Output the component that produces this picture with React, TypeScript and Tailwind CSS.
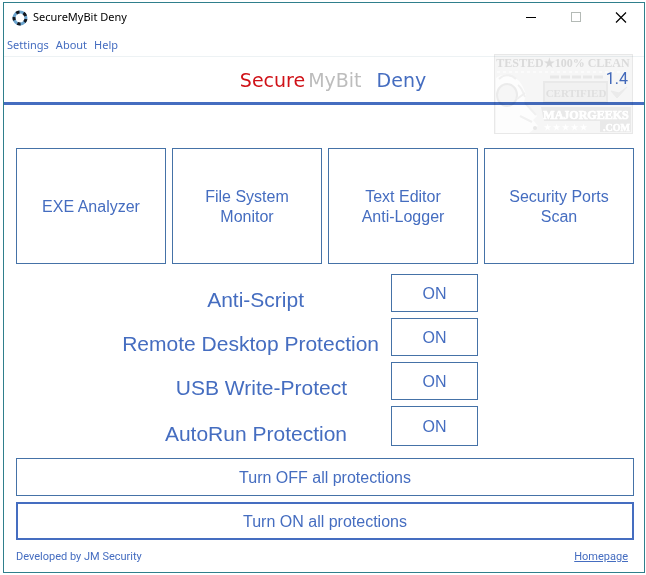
import type { ReactNode } from 'react';

const tools = [
  ['EXE Analyzer'],
  ['File System', 'Monitor'],
  ['Text Editor', 'Anti-Logger'],
  ['Security Ports', 'Scan'],
];

const protections = [
  { id: 'script', label: 'Anti-Script', pad: 'pr-[87px]', height: 'h-[38px]' },
  { id: 'rdp', label: 'Remote Desktop Protection', pad: 'pr-3', height: 'h-[38px]' },
  { id: 'usb', label: 'USB Write-Protect', pad: 'pr-11', height: 'h-[38px]' },
  { id: 'autorun', label: 'AutoRun Protection', pad: 'pr-11', height: 'h-10' },
];

export default function App() {
  return (
    <div className="bg-white pt-[2px] pr-px pb-[2px] pl-[3px] font-['Liberation_Sans',sans-serif] text-[#456dc0]">
      <div className="relative border border-[#2f7f8c] bg-white">
        <TitleBar />
        <MenuBar />
        <Header />
        <main className="pt-[43px] pr-[10px] pl-3">
          <div className="grid grid-cols-4 gap-[6px]">
            {tools.map((lines) => (
              <button key={lines[0]} className="flex h-[116px] flex-col items-center justify-center border border-[#4572a7] pt-[2px] text-base leading-5">
                {lines.map((line) => <span key={line}>{line}</span>)}
              </button>
            ))}
          </div>
          <div className="mt-[10px] flex flex-col gap-[6px]">
            {protections.map((p) => (
              <div key={p.id} className="grid grid-cols-[375fr_87fr_156fr] items-end">
                <label htmlFor={p.id} className={`text-right text-[21px] leading-6 whitespace-nowrap ${p.pad}`}>{p.label}</label>
                <button id={p.id} className={`border border-[#4572a7] pt-[2px] text-base ${p.height}`}>ON</button>
              </div>
            ))}
          </div>
          <div className="mt-3 flex flex-col gap-[6px]">
            <WideButton className="border border-[#4572a7]">Turn OFF all protections</WideButton>
            <WideButton className="border-2 border-[#456dc0]">Turn ON all protections</WideButton>
          </div>
          <footer className="flex h-8 items-center justify-between pt-[3px] pr-[6px] font-['Roboto',sans-serif] text-[11px]">
            <span>Developed by JM Security</span>
            <a href="#" className="underline">Homepage</a>
          </footer>
        </main>
        <Watermark />
      </div>
    </div>
  );
}

function TitleBar() {
  return (
    <div className="flex h-[29px] items-center pl-2 font-['Noto_Sans',sans-serif] text-[11px] text-black">
      <svg width="16" height="16" viewBox="0 0 16 16" fill="none" strokeWidth="3">
        <circle cx="8" cy="8" r="6" stroke="#6ca5cf" />
        <circle cx="8" cy="8" r="6" stroke="#14181f" strokeDasharray="3.4 4.14" strokeDashoffset="-1" />
      </svg>
      <span className="ml-[5px] flex-1">SecureMyBit Deny</span>
      <button aria-label="Minimize" className="flex h-full w-[45px] items-center justify-center">
        <svg width="12" height="12" stroke="#000"><path d="M1 5.5h10" /></svg>
      </button>
      <button aria-label="Maximize" className="flex h-full w-[45px] items-center justify-center">
        <svg width="12" height="12" fill="none" stroke="#b4bab6"><rect x="1.5" y="0.5" width="9" height="9" /></svg>
      </button>
      <button aria-label="Close" className="flex h-full w-[46px] items-center justify-center">
        <svg width="12" height="12" stroke="#000" strokeWidth="1.2"><path d="M1 0.5l10 10M11 0.5l-10 10" /></svg>
      </button>
    </div>
  );
}

function MenuBar() {
  return (
    <nav className="flex h-[25px] items-center gap-[7px] border-b border-[#edf2f4] pt-[2px] pl-[3px] font-['Noto_Sans',sans-serif] text-[11px]">
      <button>Settings</button>
      <button>About</button>
      <button>Help</button>
    </nav>
  );
}

function Header() {
  return (
    <header className="grid h-12 grid-cols-[1fr_auto_1fr] items-center border-b-[3px] border-[#456dc0] pr-4 pl-[34px]">
      <h1 className="col-start-2 flex pt-[2px] font-['DejaVu_Sans',sans-serif] text-[19px]">
        <span className="text-[#d01218]">Secure</span>
        <span className="ml-[3px] text-[#bdbdbd]">MyBit</span>
        <span className="ml-[15px]">Deny</span>
      </h1>
      <span className="pb-[2px] text-right font-['Roboto',sans-serif] text-base leading-4">1.4</span>
    </header>
  );
}

function WideButton({ className, children }: { className: string; children: ReactNode }) {
  return <button className={`h-[38px] w-full pt-[2px] text-base ${className}`}>{children}</button>;
}

// certification stamp laid over the top right corner
function Watermark() {
  return (
    <svg
      className="pointer-events-none absolute top-[51px] right-[11px] font-['Liberation_Serif',serif] font-bold mix-blend-multiply"
      width="139"
      height="80"
      viewBox="0 0 139 80"
    >
      <rect x="0.5" y="0.5" width="138" height="79" fill="#f6f6f6" stroke="#e8e8e8" />
      <path d="M3 18h132" stroke="#fbfbfb" strokeWidth="2" strokeDasharray="3 3" />
      <text x="69" y="13" textAnchor="middle" fontSize="12" fill="#dadada">TESTED★100% CLEAN</text>
      <path d="M56 23h54" stroke="#e8e8e8" strokeWidth="3" strokeDasharray="9 2" />
      <rect x="50" y="28" width="63" height="20" fill="#f1f1f1" stroke="#e9e9e9" strokeWidth="2" />
      <text x="82" y="43" textAnchor="middle" fontSize="11" fill="#dfdfdf">CERTIFIED</text>
      <path d="M117 37l6 7 10-11-8 6z" fill="#ebebeb" stroke="#ebebeb" />
      <path d="M2 24c6-5 16-4 22 2 5 5 6 10 8 14l-2 8 13 14-4 4 5 6-9 7H2z" fill="#fdfdfd" />
      <path d="M5 25c5-5 12-5 17 0M24 31c4 3 5 7 7 12M31 49l11 12M26 62l12 6" fill="none" stroke="#f0f0f0" strokeWidth="2" />
      <ellipse cx="13" cy="41" rx="10" ry="11" fill="#f6f6f6" stroke="#ebebeb" strokeWidth="2" />
      <path d="M23 45l8-6" fill="none" stroke="#efefef" strokeWidth="2" />
      <circle cx="41" cy="74" r="2" fill="#e8e8e8" />
      <path d="M47 53h90v14H50zM106 67h31v11h-31z" fill="#e9e9e9" />
      <text x="92" y="65" textAnchor="middle" fontSize="12" fill="#fff" stroke="#fff" strokeWidth="0.7">MAJORGEEKS</text>
      <text x="50" y="76" fontSize="8" fill="#fff">★ ★ ★ ★ ★</text>
      <text x="136" y="77" textAnchor="end" fontSize="10" fill="#fff" stroke="#fff" strokeWidth="0.5">.COM</text>
    </svg>
  );
}
